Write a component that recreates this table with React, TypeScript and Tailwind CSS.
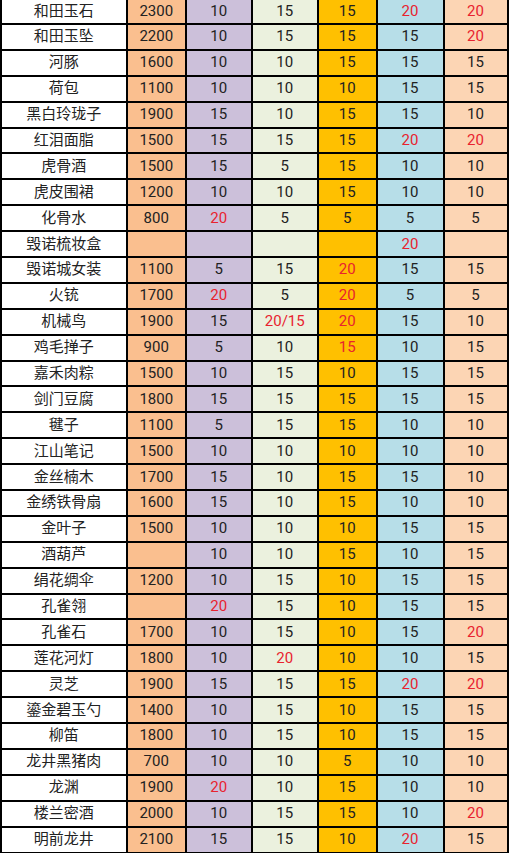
import React from "react";

type Row = [string, string, string, string, string, string, string];

const rows: Row[] = [
  ["和田玉石", "2300", "10", "15", "15", "20r", "20r"],
  ["和田玉坠", "2200", "10", "15", "15", "15", "20r"],
  ["河豚", "1600", "10", "10", "15", "15", "15"],
  ["荷包", "1100", "10", "10", "10", "15", "15"],
  ["黑白玲珑子", "1900", "15", "10", "15", "15", "10"],
  ["红泪面脂", "1500", "15", "15", "15", "20r", "20r"],
  ["虎骨酒", "1500", "15", "5", "15", "10", "10"],
  ["虎皮围裙", "1200", "10", "10", "15", "10", "10"],
  ["化骨水", "800", "20r", "5", "5", "5", "5"],
  ["毁诺梳妆盒", "", "", "", "", "20r", ""],
  ["毁诺城女装", "1100", "5", "15", "20r", "15", "15"],
  ["火铳", "1700", "20r", "5", "20r", "5", "5"],
  ["机械鸟", "1900", "15", "20/15r", "20r", "15", "10"],
  ["鸡毛掸子", "900", "5", "10", "15r", "10", "15"],
  ["嘉禾肉粽", "1500", "10", "15", "10", "15", "15"],
  ["剑门豆腐", "1800", "15", "15", "15", "15", "15"],
  ["毽子", "1100", "5", "15", "15", "10", "10"],
  ["江山笔记", "1500", "10", "10", "10", "10", "10"],
  ["金丝楠木", "1700", "15", "10", "15", "15", "10"],
  ["金绣铁骨扇", "1600", "15", "10", "15", "10", "10"],
  ["金叶子", "1500", "10", "10", "10", "15", "15"],
  ["酒葫芦", "", "10", "10", "15", "10", "15"],
  ["绢花绸伞", "1200", "10", "15", "10", "15", "15"],
  ["孔雀翎", "", "20r", "15", "10", "15", "15"],
  ["孔雀石", "1700", "10", "15", "10", "15", "20r"],
  ["莲花河灯", "1800", "10", "20r", "10", "10", "15"],
  ["灵芝", "1900", "15", "15", "15", "20r", "20r"],
  ["鎏金碧玉勺", "1400", "10", "15", "10", "15", "15"],
  ["柳笛", "1800", "10", "15", "10", "15", "15"],
  ["龙井黑猪肉", "700", "10", "10", "5", "10", "10"],
  ["龙渊", "1900", "20r", "10", "15", "10", "10"],
  ["楼兰密酒", "2000", "10", "15", "15", "10", "20r"],
  ["明前龙井", "2100", "15", "15", "10", "20r", "15"],
];

const bgs = [
  "bg-white",
  "bg-[#fabf8f]",
  "bg-[#ccc0da]",
  "bg-[#ebf1de]",
  "bg-[#ffc000]",
  "bg-[#b7dee8]",
  "bg-[#fcd5b4]",
];

function Cell({ value, col }: { value: string; col: number }) {
  const red = value.endsWith("r");
  const text = red ? value.slice(0, -1) : value;
  return (
    <div
      className={`${bgs[col]} flex items-center justify-center leading-none ${
        red ? "text-[#e8232f]" : "text-[#222222]"
      }`}
    >
      {text}
    </div>
  );
}

export default function App() {
  return (
    <div className="w-[509px] h-[853px] overflow-hidden bg-white">
      <div
        className="-mt-[2.9px] grid grid-cols-[123.5px_57.5px_63.5px_64.5px_56.5px_65px_62px] auto-rows-[23.9px] gap-[2px] p-[2px] bg-black text-[15px]"
        style={{ fontFamily: 'Roboto, "Noto Sans CJK SC", sans-serif' }}
      >
        {rows.map((r, i) => (
          <React.Fragment key={i}>
            {r.map((v, j) => (
              <Cell key={j} value={v} col={j} />
            ))}
          </React.Fragment>
        ))}
      </div>
    </div>
  );
}
